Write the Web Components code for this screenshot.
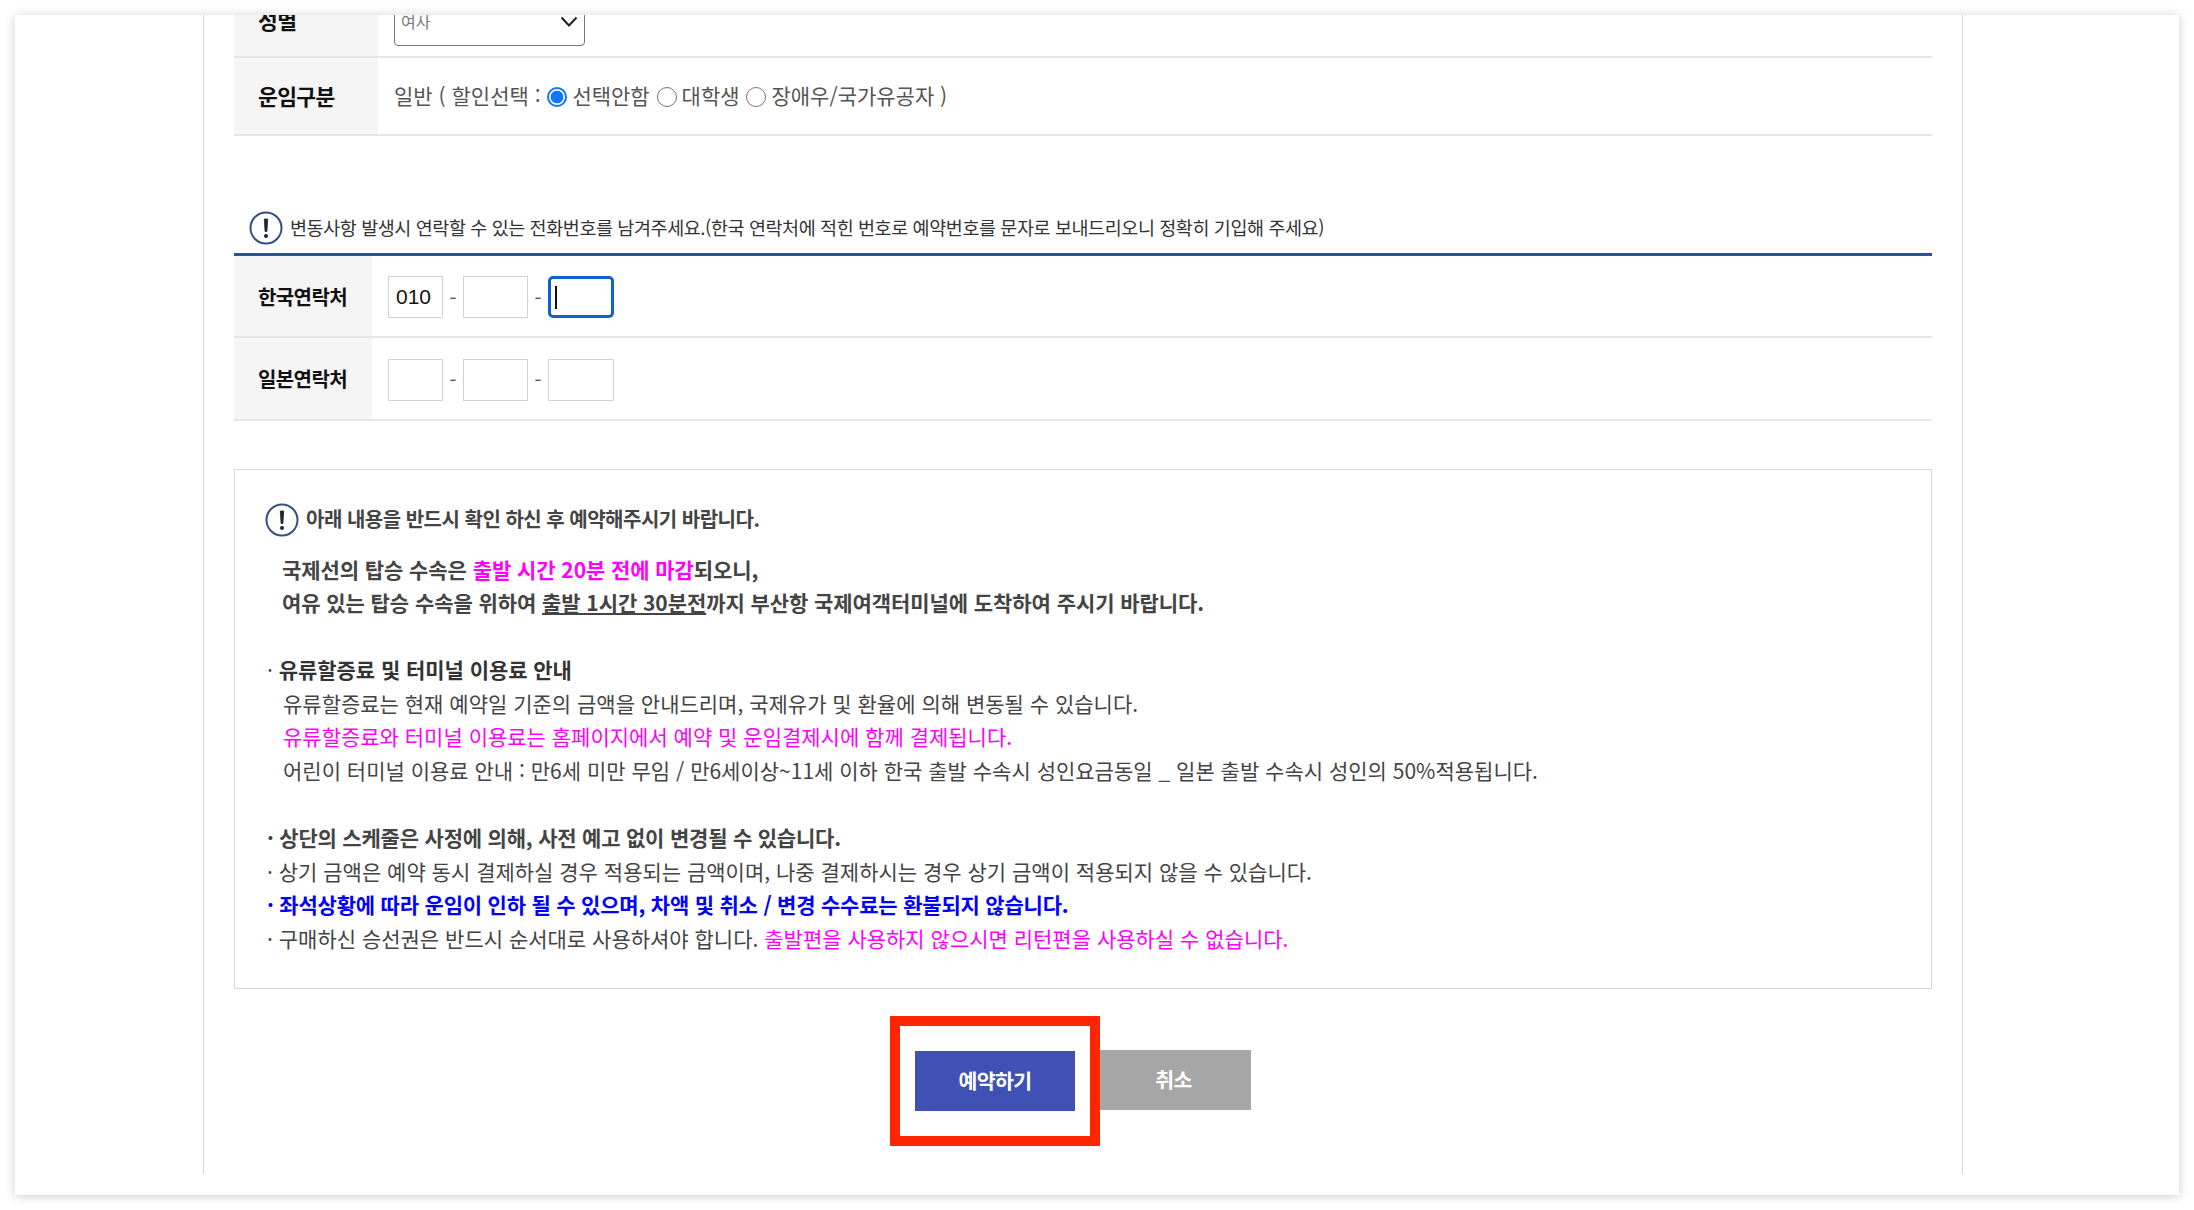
<!DOCTYPE html>
<html lang="ko"><head><meta charset="utf-8"><style>
html,body{margin:0;padding:0;background:#fff;height:100%;overflow:hidden}
body{font-family:"Noto Sans CJK KR","Noto Sans",sans-serif}
</style></head><body>
<template id="t-window"><style>
:host{display:block;box-sizing:border-box;margin:15px;height:1180px;background:#fff;overflow:hidden;box-shadow:0 1px 10px rgba(0,0,0,.2);font-family:"Noto Sans CJK KR","Noto Sans",sans-serif;color:#333}
.col{box-sizing:border-box;margin:0 216px 0 188px;height:1159px;border:solid #d8d8d8;border-width:0 1px;padding:0 30px 0 30px;overflow:hidden}
</style><div class="col"><slot></slot></div></template>

<template id="t-row"><style>
:host{display:flex;box-sizing:border-box;border-bottom:2px solid #e6e6e6;height:var(--h,60px)}
.th{box-sizing:border-box;width:var(--w,144px);flex:none;background:#f5f5f5;padding-left:24px;display:flex;align-items:center;font-size:var(--thfs,21.5px);font-weight:700;color:#111;letter-spacing:-.6px}
.td{flex:1;display:flex;align-items:center;padding-left:var(--pl,16px);font-size:21px;color:#555}
</style><div class="th"><slot name="label"></slot></div><div class="td"><slot></slot></div></template>

<template id="t-select"><style>
:host{display:block;box-sizing:border-box;width:191px;height:50px;border:1px solid #777;border-radius:4px;position:relative;font-size:16px;line-height:22px;color:#777;padding:13px 0 0 6px;margin-top:6px}
svg{position:absolute;right:6px;top:19px}
</style><slot></slot><svg width="18" height="12" viewBox="0 0 18 12" fill="none" stroke="#222" stroke-width="2"><path d="M1.5 1.5L9 9.5l7.5-8"/></svg></template>

<template id="t-radio"><style>
:host{display:inline-block;vertical-align:-3px;margin:0 5px 0 1px}
i{display:block;box-sizing:border-box;width:20px;height:20px;border-radius:50%;border:1px solid #767676;background:#fff}
:host([on]) i{border:2px solid #0f75ff;background:radial-gradient(circle,#0f75ff 0 6px,#fff 6.7px)}
</style><i></i></template>

<template id="t-note"><style>
:host{display:flex;align-items:center;box-sizing:border-box;height:var(--h,auto);font-size:var(--fs,18.5px);letter-spacing:var(--ls,-.42px);font-weight:var(--fw,400);color:var(--nc,#333)}
svg{flex:none;margin-right:var(--gap,7px)}
span{padding-bottom:3px}
</style><svg width="34" height="34" viewBox="0 0 34 34" fill="none"><circle cx="17" cy="17" r="15.5" stroke="#34507f" stroke-width="2"/><path d="M15.3 8h3.4l-.8 12.5h-1.8z" fill="#1b2430" stroke="#1b2430" stroke-width=".8" stroke-linejoin="round"/><circle cx="17" cy="25" r="2" fill="#1b2430"/></svg><span><slot></slot></span></template>

<template id="t-box"><style>
:host{display:inline-flex;align-items:center;box-sizing:border-box;height:42px;width:var(--bw,66px);border:1px solid #d2d2d2;font-family:"Liberation Sans",sans-serif;font-size:21px;color:#111;padding-left:7px}
:host([focus]){border:3px solid #0f62c9;border-radius:5px;padding-left:4px}
:host([focus])::after{content:"";display:block;width:2px;height:23px;background:#111}
</style><slot></slot></template>

<template id="t-phone"><style>
:host{display:flex;align-items:center;margin-top:2px}
span{width:20px;text-align:center;font-size:20px;color:#555;flex:none}
</style><slot name="a"></slot><span>-</span><slot name="b"></slot><span>-</span><slot name="c"></slot></template>

<template id="t-notice"><style>
:host{display:block;box-sizing:border-box;height:520px;margin-top:48px;border:1px solid #d8d8d8;padding:33px 32px 0 32px;font-size:21px;line-height:33.6px;color:#444}
</style><slot></slot></template>

<template id="t-actions"><style>
:host{display:flex;justify-content:center;margin-top:27px;padding-right:25px}
.hl{box-sizing:border-box;width:210px;height:130px;border:10px solid #ff2600;display:flex;align-items:center;justify-content:center}
.b{box-sizing:border-box;display:flex;align-items:center;justify-content:center;height:60px;color:#fff;font-weight:700;font-size:20.5px;letter-spacing:-.6px;padding-bottom:3px}
.ok{width:160px;background:#3f51b5}.no{width:151px;background:#a6a6a6;padding-right:4px}
</style><div class="hl"><div class="b ok">예약하기</div></div><div class="b no" style="margin-top:34px">취소</div></template>

<bus-window>
  <form-row style="--h:79px;margin-top:-36px">
    <span slot="label" style="padding-top:3px">성별</span>
    <fake-select>여사</fake-select>
  </form-row>
  <form-row style="--h:78px">
    <span slot="label" style="padding-bottom:2px">운임구분</span>
    <span style="padding-bottom:2px">일반 ( 할인선택 : <fake-radio on></fake-radio>선택안함 <fake-radio></fake-radio>대학생 <fake-radio></fake-radio>장애우/국가유공자 )</span>
  </form-row>
  <note-line style="--h:50px;margin:67px 0 0 15px">변동사항 발생시 연락할 수 있는 전화번호를 남겨주세요.(한국 연락처에 적힌 번호로 예약번호를 문자로 보내드리오니 정확히 기입해 주세요)</note-line>
  <div style="height:3px;background:#2d4fa5"></div>
  <form-row style="--h:82px;--w:138px;--pl:16px;--thfs:20px">
    <span slot="label">한국연락처</span>
    <phone-set><text-box slot="a" style="--bw:55px">010</text-box><text-box slot="b" style="--bw:65px"></text-box><text-box slot="c" focus></text-box></phone-set>
  </form-row>
  <form-row style="--h:83px;--w:138px;--pl:16px;--thfs:20px">
    <span slot="label">일본연락처</span>
    <phone-set><text-box slot="a" style="--bw:55px"></text-box><text-box slot="b" style="--bw:65px"></text-box><text-box slot="c"></text-box></phone-set>
  </form-row>
  <notice-box>
    <note-line style="--fw:700;--fs:20px;--h:34px;--gap:7px;--ls:-.5px;--nc:#444;margin-left:-2px">아래 내용을 반드시 확인 하신 후 예약해주시기 바랍니다.</note-line>
    <div style="margin-top:16px;padding-left:15px;font-weight:700;color:#444;letter-spacing:-.07px">국제선의 탑승 수속은 <b style="color:#f0f;font-weight:700">출발 시간 20분 전에 마감</b>되오니,<br><span style="position:relative;top:-1px">여유 있는 탑승 수속을 위하여 <u>출발 1시간 30분전</u>까지 부산항 국제여객터미널에 도착하여 주시기 바랍니다.</span></div>
    <div style="margin-top:33px">· <b style="color:#333;font-weight:700;letter-spacing:-.05px">유류할증료 및 터미널 이용료 안내</b></div>
    <div style="padding-left:16px">유류할증료는 현재 예약일 기준의 금액을 안내드리며, 국제유가 및 환율에 의해 변동될 수 있습니다.<br><span style="color:#f0f">유류할증료와 터미널 이용료는 홈페이지에서 예약 및 운임결제시에 함께 결제됩니다.</span><br>어린이 터미널 이용료 안내 : 만6세 미만 무임 / 만6세이상~11세 이하 한국 출발 수속시 성인요금동일 _ 일본 출발 수속시 성인의 50%적용됩니다.</div>
    <div style="margin-top:33.6px"><b style="font-weight:700;letter-spacing:-.2px">· 상단의 스케줄은 사정에 의해, 사전 예고 없이 변경될 수 있습니다.</b><br>· 상기 금액은 예약 동시 결제하실 경우 적용되는 금액이며, 나중 결제하시는 경우 상기 금액이 적용되지 않을 수 있습니다.<br><b style="color:#00f;font-weight:700;letter-spacing:-.2px">· 좌석상황에 따라 운임이 인하 될 수 있으며, 차액 및 취소 / 변경 수수료는 환불되지 않습니다.</b><br>· 구매하신 승선권은 반드시 순서대로 사용하셔야 합니다. <span style="color:#f0f">출발편을 사용하지 않으시면 리턴편을 사용하실 수 없습니다.</span></div>
  </notice-box>
  <action-bar></action-bar>
</bus-window>
<script>
const reg=(n,id)=>customElements.define(n,class extends HTMLElement{constructor(){super();this.attachShadow({mode:'open'}).appendChild(document.getElementById(id).content.cloneNode(true));}});
reg('bus-window','t-window');reg('form-row','t-row');reg('fake-select','t-select');reg('fake-radio','t-radio');reg('note-line','t-note');reg('text-box','t-box');reg('phone-set','t-phone');reg('notice-box','t-notice');reg('action-bar','t-actions');
</script></body></html>
